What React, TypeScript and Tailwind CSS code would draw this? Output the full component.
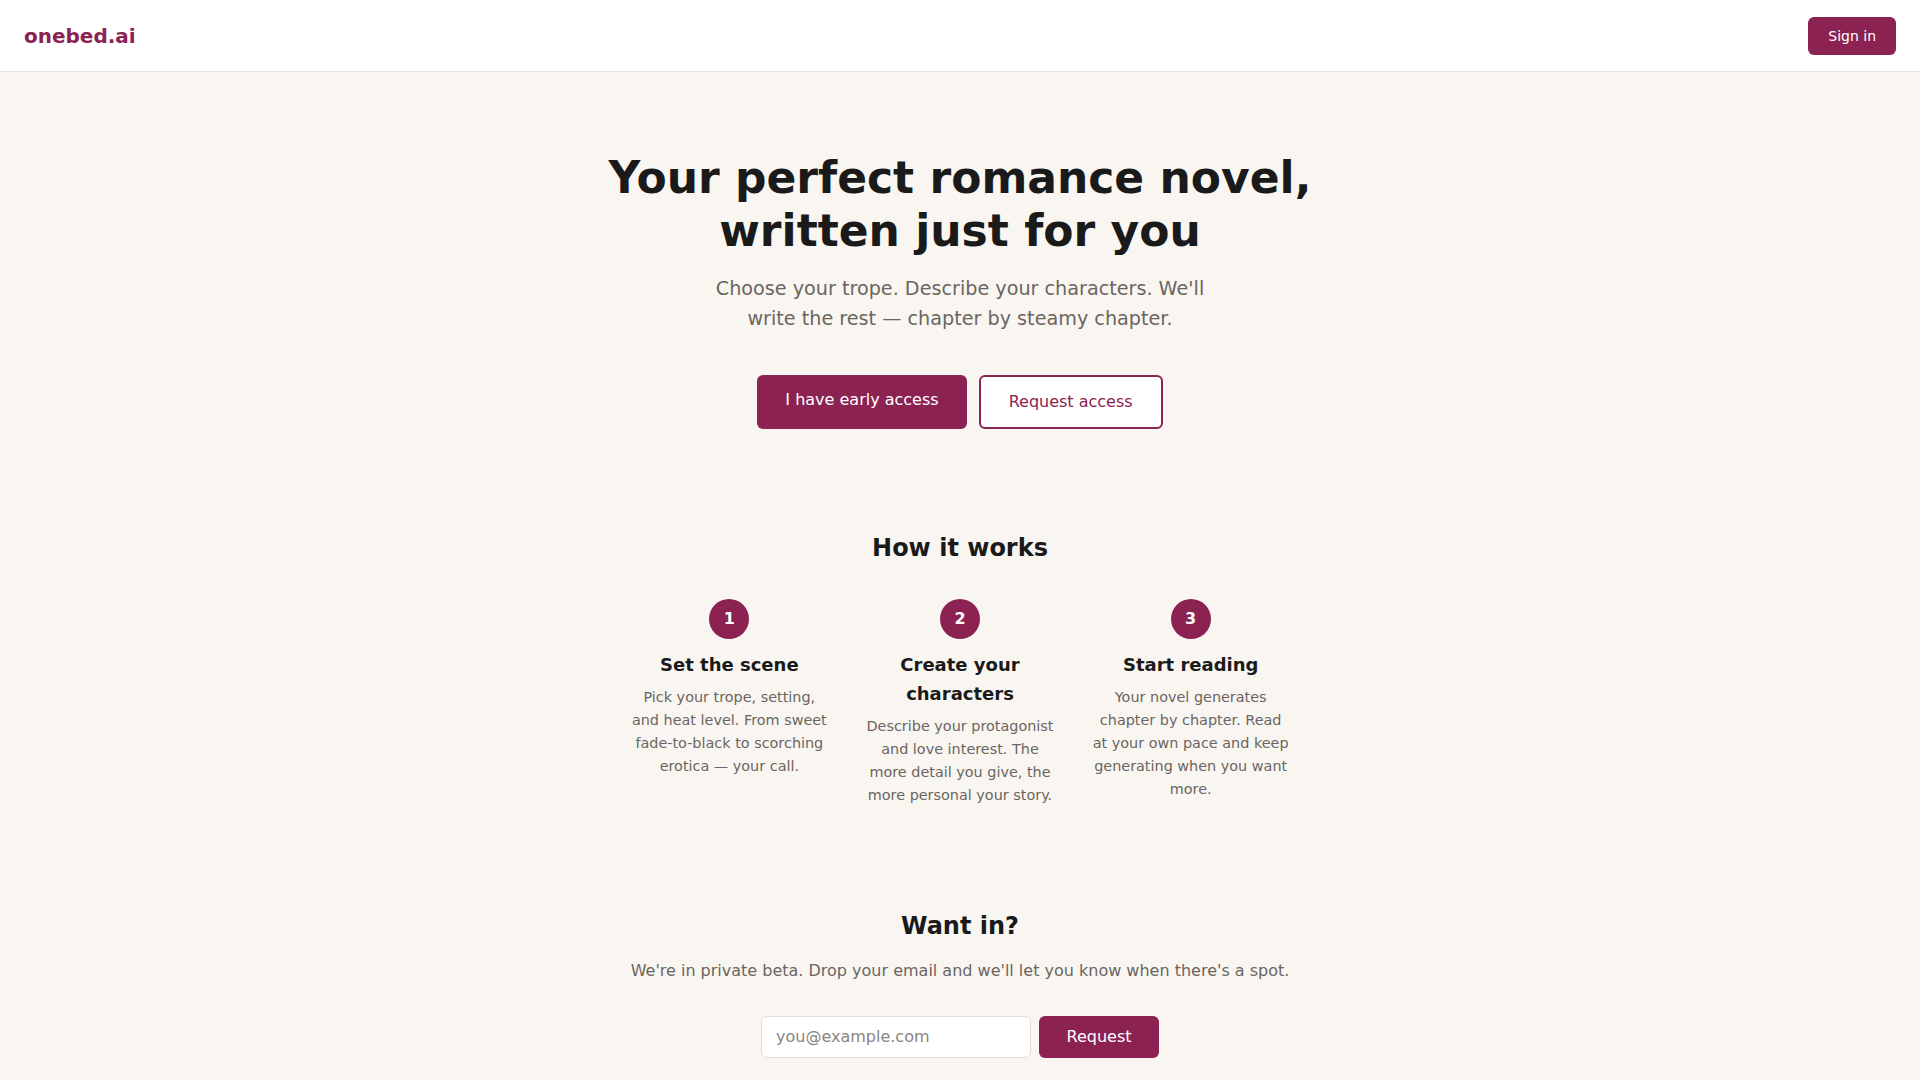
import React from "react";

const steps = [
  {
    n: 1,
    title: "Set the scene",
    text: "Pick your trope, setting, and heat level. From sweet fade-to-black to scorching erotica — your call.",
  },
  {
    n: 2,
    title: "Create your characters",
    text: "Describe your protagonist and love interest. The more detail you give, the more personal your story.",
  },
  {
    n: 3,
    title: "Start reading",
    text: "Your novel generates chapter by chapter. Read at your own pace and keep generating when you want more.",
  },
];

export default function App() {
  return (
    <div className="min-h-screen bg-[#f9f6f2] font-['DejaVu_Sans',sans-serif] text-[#1a1a1a]">
      {/* Header */}
      <header className="h-[72px] bg-white border-b border-[#e8e0d6] flex items-center justify-between px-6">
        <span className="text-[20px] font-bold text-[#8b2252]">onebed.ai</span>
        <button className="h-[38px] px-5 rounded-md bg-[#8b2252] text-white text-sm">
          Sign in
        </button>
      </header>

      {/* Hero */}
      <section className="flex flex-col items-center text-center pt-[80px]">
        <h1 className="text-[44px] leading-[1.2] font-bold text-[#1a1a1a]">
          Your perfect romance novel,
          <br />
          written just for you
        </h1>
        <p className="mt-[16px] max-w-[512px] text-[19.2px] leading-[30px] text-[#6b6560]">
          Choose your trope. Describe your characters. We'll write the rest — chapter by steamy chapter.
        </p>
        <div className="mt-[41px] flex gap-3">
          <button className="h-[54px] px-7 pb-[3px] rounded-md bg-[#8b2252] text-white text-base">
            I have early access
          </button>
          <button className="h-[54px] px-7 rounded-md border-2 border-[#8b2252] bg-white text-[#8b2252] text-base">
            Request access
          </button>
        </div>
      </section>

      {/* How it works */}
      <section className="flex flex-col items-center text-center mt-[100px]">
        <h2 className="text-2xl leading-[1.6] font-bold">How it works</h2>
        <div className="mt-8 grid grid-cols-3 gap-8 w-[660px]">
          {steps.map((s) => (
            <div key={s.n} className="flex flex-col items-center">
              <div className="w-10 h-10 rounded-full bg-[#8b2252] text-white font-bold text-base flex items-center justify-center">
                {s.n}
              </div>
              <h3 className="mt-3 text-lg leading-[1.6] font-bold">{s.title}</h3>
              <p className="mt-1.5 text-[14.4px] leading-[1.6] text-[#6b6560]">{s.text}</p>
            </div>
          ))}
        </div>
      </section>

      {/* Want in */}
      <section className="flex flex-col items-center text-center mt-[100px] pb-24">
        <h2 className="text-2xl leading-[1.6] font-bold">Want in?</h2>
        <p className="mt-[13px] text-base leading-[1.6] text-[#6b6560]">
          We're in private beta. Drop your email and we'll let you know when there's a spot.
        </p>
        <form className="mt-8 flex gap-2" onSubmit={(e) => e.preventDefault()}>
          <input
            type="email"
            placeholder="you@example.com"
            className="w-[270px] h-[42px] px-3.5 rounded-md border border-[#e5ddd3] bg-white text-base placeholder:text-[#8a8580] outline-none"
          />
          <button className="w-[120px] h-[42px] rounded-md bg-[#8b2252] text-white text-base">
            Request
          </button>
        </form>
      </section>
    </div>
  );
}
